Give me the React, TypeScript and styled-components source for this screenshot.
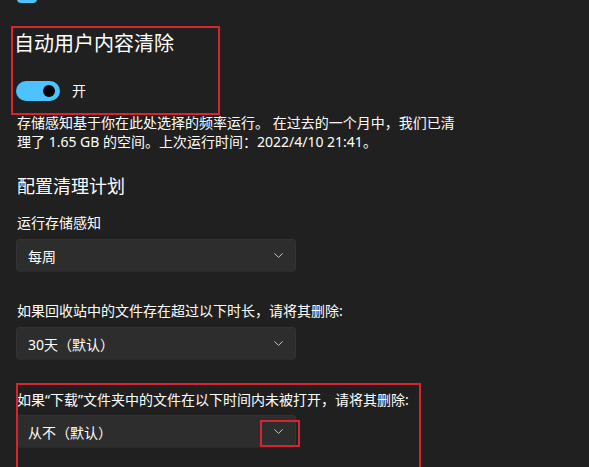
import React from "react";
import styled, { createGlobalStyle } from "styled-components";

const GlobalStyle = createGlobalStyle`
  html, body {
    margin: 0;
    padding: 0;
    background: #202020;
  }
  body {
    font-family: "Noto Sans", "Noto Sans CJK SC", sans-serif;
    color: #ffffff;
    -webkit-font-smoothing: antialiased;
  }
`;

const Page = styled.div`
  position: relative;
  width: 589px;
  height: 467px;
  overflow: hidden;
  padding-left: 17px;
  box-sizing: border-box;
  background: #202020;
  display: flex;
  flex-direction: column;
  align-items: flex-start;
`;

const Checkbox = styled.div`
  width: 20px;
  height: 20px;
  margin-top: -17px;
  border-radius: 4px;
  background: #4cc2ff;
  flex: none;
`;

const Section = styled.div<{ $mt: number }>`
  position: relative;
  margin-top: ${(p) => p.$mt}px;
  display: flex;
  flex-direction: column;
  align-items: flex-start;
`;

const Highlight = styled.div<{ $top: number; $left: number; $w: number; $h: number }>`
  position: absolute;
  top: ${(p) => p.$top}px;
  left: ${(p) => p.$left}px;
  width: ${(p) => p.$w}px;
  height: ${(p) => p.$h}px;
  border: 2px solid #d9232f;
  box-sizing: border-box;
  pointer-events: none;
`;

const Title = styled.h1`
  margin: 0 0 0 -3px;
  font-size: 20px;
  line-height: 28px;
  font-weight: 400;
`;

const ToggleRow = styled.div`
  margin-top: 23px;
  display: flex;
  align-items: center;
  gap: 12px;
  margin-left: -1px;
`;

const Toggle = styled.div`
  width: 44px;
  height: 20px;
  border-radius: 10px;
  background: #4cc2ff;
  display: flex;
  align-items: center;
  justify-content: flex-end;
  padding-right: 5px;
  box-sizing: border-box;
`;

const Knob = styled.div`
  width: 12px;
  height: 12px;
  border-radius: 50%;
  background: #000000;
`;

const ToggleLabel = styled.span`
  font-size: 14px;
  line-height: 20px;
`;

const Body = styled.p`
  margin: 12px 0 0 0;
  font-size: 14px;
  line-height: 19px;
  width: 460px;
`;

const Heading = styled.h2`
  margin: 22px 0 0 0;
  font-size: 18px;
  line-height: 26px;
  font-weight: 400;
`;

const Label = styled.div<{ $mt: number }>`
  margin-top: ${(p) => p.$mt}px;
  font-size: 14px;
  line-height: 20px;
  white-space: nowrap;
`;

const Dropdown = styled.div<{ $mt: number }>`
  position: relative;
  margin-top: ${(p) => p.$mt}px;
  margin-left: -1px;
  width: 280px;
  height: 33px;
  box-sizing: border-box;
  background: #2d2d2d;
  border: 1px solid #333333;
  border-bottom-color: #2a2a2a;
  border-radius: 4px;
  display: flex;
  align-items: center;
  justify-content: space-between;
  padding: 0 12px 0 11px;
  font-size: 14px;
  color: #ffffff;
`;

const Chevron = () => (
  <svg width="9" height="5" viewBox="0 0 9 5" fill="none">
    <path d="M0.6 0.6 L4.5 4.4 L8.4 0.6" stroke="#c4c4c4" strokeWidth="1" strokeLinecap="round" strokeLinejoin="round" />
  </svg>
);

export default function App() {
  return (
    <>
      <GlobalStyle />
      <Page>
        <Checkbox />
        <Section $mt={27}>
          <Title>自动用户内容清除</Title>
          <ToggleRow>
            <Toggle>
              <Knob />
            </Toggle>
            <ToggleLabel>开</ToggleLabel>
          </ToggleRow>
          <Highlight $top={-4} $left={-6} $w={209} $h={89} />
        </Section>
        <Body>
          存储感知基于你在此处选择的频率运行。 在过去的一个月中，我们已清
          <br />
          理了 1.65 GB 的空间。上次运行时间：2022/4/10 21:41。
        </Body>
        <Heading>配置清理计划</Heading>
        <Label $mt={14}>运行存储感知</Label>
        <Dropdown $mt={6}>
          <span>每周</span>
          <Chevron />
        </Dropdown>
        <Label $mt={29}>如果回收站中的文件存在超过以下时长，请将其删除:</Label>
        <Dropdown $mt={6}>
          <span>30天（默认）</span>
          <Chevron />
        </Dropdown>
        <Section $mt={30}>
          <Label $mt={0}>如果“下载”文件夹中的文件在以下时间内未被打开，请将其删除:</Label>
          <Dropdown $mt={5}>
            <span>从不（默认）</span>
            <Chevron />
            <Highlight $top={4} $left={243} $w={40} $h={27} />
          </Dropdown>
          <Highlight $top={-7} $left={-1} $w={405} $h={120} />
        </Section>
      </Page>
    </>
  );
}
